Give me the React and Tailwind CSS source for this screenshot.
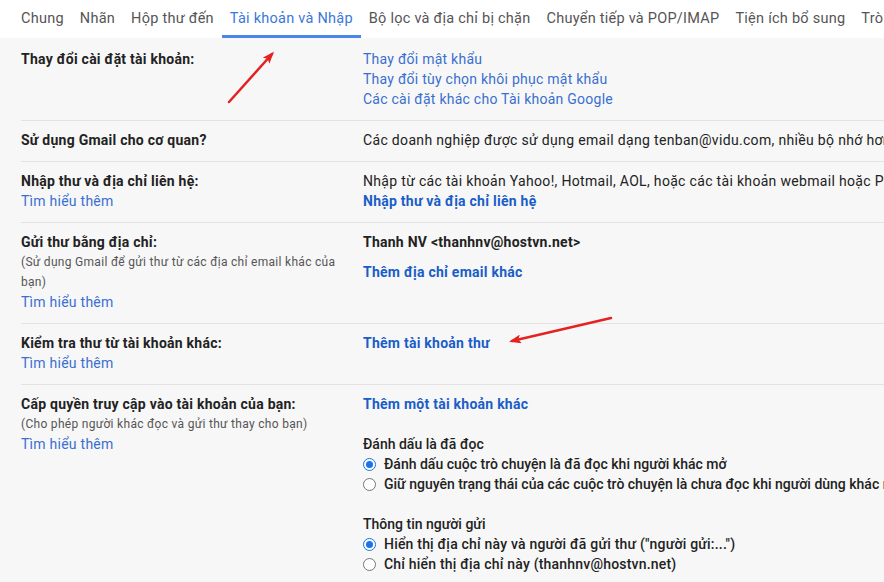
import React from 'react';

const tabs = [
  'Chung',
  'Nhãn',
  'Hộp thư đến',
  'Tài khoản và Nhập',
  'Bộ lọc và địa chỉ bị chặn',
  'Chuyển tiếp và POP/IMAP',
  'Tiện ích bổ sung',
  'Trò chuyện và Meet',
];

function Radio({ checked }) {
  return (
    <span
      className={`inline-flex w-[13px] h-[13px] rounded-full border items-center justify-center shrink-0 bg-white ${
        checked ? 'border-[#1a73e8]' : 'border-[#767676]'
      }`}
    >
      {checked && <span className="w-[7px] h-[7px] rounded-full bg-[#1a73e8]" />}
    </span>
  );
}

function Row({ first, label, children, right }) {
  return (
    <div className={`flex border-b border-[#e3e3e3] pb-[11px] ${first ? 'pt-[11px]' : 'pt-[9px]'}`}>
      <div className="w-[342px] shrink-0 pr-3">
        <div className="font-bold text-[#222]">{label}</div>
        {children}
      </div>
      <div className="whitespace-nowrap">{right}</div>
    </div>
  );
}

const learn = <div className="text-[#3a6fd0]">Tìm hiểu thêm</div>;

export default function App() {
  return (
    <div
      className="relative w-[884px] h-[582px] overflow-hidden bg-[#f7f7f7] text-[14px] leading-5 tracking-[0.25px] text-[#222]"
      style={{ fontFamily: 'Roboto, "Liberation Sans", sans-serif' }}
    >
      {/* Tabs */}
      <div className="flex h-[38px] bg-white pl-[13px] whitespace-nowrap">
        {tabs.map((t) => {
          const active = t === 'Tài khoản và Nhập';
          return (
            <div
              key={t}
              className={`px-2 flex items-center border-b-[3px] pt-[3px] text-[14.5px] tracking-[0.25px] ${
                active ? 'border-[#4a86e8] text-[#3a78dc]' : 'border-transparent text-[#555]'
              }`}
            >
              {t}
            </div>
          );
        })}
      </div>

      {/* Settings rows */}
      <div className="pl-[21px]">
        <Row
          first
          label="Thay đổi cài đặt tài khoản:"
          right={
            <div className="text-[#3a6fd0]">
              <div>Thay đổi mật khẩu</div>
              <div>Thay đổi tùy chọn khôi phục mật khẩu</div>
              <div>Các cài đặt khác cho Tài khoản Google</div>
            </div>
          }
        />
        <Row
          label="Sử dụng Gmail cho cơ quan?"
          right={<div className="tracking-[0.33px]">Các doanh nghiệp được sử dụng email dạng tenban@vidu.com, nhiều bộ nhớ hơn và các công cụ quản trị</div>}
        />
        <Row
          label="Nhập thư và địa chỉ liên hệ:"
          right={
            <>
              <div className="tracking-[0.32px]">Nhập từ các tài khoản Yahoo!, Hotmail, AOL, hoặc các tài khoản webmail hoặc POP3 khác.</div>
              <div className="font-bold text-[#1a5dc8]">Nhập thư và địa chỉ liên hệ</div>
            </>
          }
        >
          {learn}
        </Row>
        <Row
          label="Gửi thư bằng địa chỉ:"
          right={
            <>
              <div className="font-bold">Thanh NV &lt;thanhnv@hostvn.net&gt;</div>
              <div className="font-bold text-[#1a5dc8] mt-[10px]">Thêm địa chỉ email khác</div>
            </>
          }
        >
          <div className="text-[12px] text-[#555] leading-5 tracking-[0.3px]">(Sử dụng Gmail để gửi thư từ các địa chỉ email khác của bạn)</div>
          {learn}
        </Row>
        <Row
          label="Kiểm tra thư từ tài khoản khác:"
          right={<div className="font-bold text-[#1a5dc8]">Thêm tài khoản thư</div>}
        >
          {learn}
        </Row>
        <Row
          label="Cấp quyền truy cập vào tài khoản của bạn:"
          right={
            <div className="tracking-normal">
              <div className="font-bold text-[#1a5dc8] tracking-[0.25px]">Thêm một tài khoản khác</div>
              <div className="mt-5 font-medium">Đánh dấu là đã đọc</div>
              <div className="flex items-center gap-2 font-medium">
                <Radio checked />
                Đánh dấu cuộc trò chuyện là đã đọc khi người khác mở
              </div>
              <div className="flex items-center gap-2 font-medium">
                <Radio />
                Giữ nguyên trạng thái của các cuộc trò chuyện là chưa đọc khi người dùng khác mở
              </div>
              <div className="mt-5 font-medium">Thông tin người gửi</div>
              <div className="flex items-center gap-2 font-medium tracking-[0.2px]">
                <Radio checked />
                Hiển thị địa chỉ này và người đã gửi thư ("người gửi:...")
              </div>
              <div className="flex items-center gap-2 font-medium tracking-[0.2px]">
                <Radio />
                Chỉ hiển thị địa chỉ này (thanhnv@hostvn.net)
              </div>
            </div>
          }
        >
          <div className="text-[12px] text-[#555] leading-5 tracking-[0.3px]">(Cho phép người khác đọc và gửi thư thay cho bạn)</div>
          {learn}
        </Row>
      </div>

      {/* Annotation arrows */}
      <svg className="absolute left-0 top-0 pointer-events-none" width="884" height="582">
        <defs>
          <marker id="ah" markerWidth="12" markerHeight="9" refX="9" refY="4.5" orient="auto" markerUnits="userSpaceOnUse">
            <path d="M0,0 L12,4.5 L0,9 L2.5,4.5 Z" fill="#e52222" />
          </marker>
        </defs>
        <line x1="229" y1="102" x2="272" y2="54" stroke="#e52222" strokeWidth="2.5" strokeLinecap="round" markerEnd="url(#ah)" />
        <line x1="611" y1="318" x2="512" y2="341" stroke="#e52222" strokeWidth="2.5" strokeLinecap="round" markerEnd="url(#ah)" />
      </svg>
    </div>
  );
}
